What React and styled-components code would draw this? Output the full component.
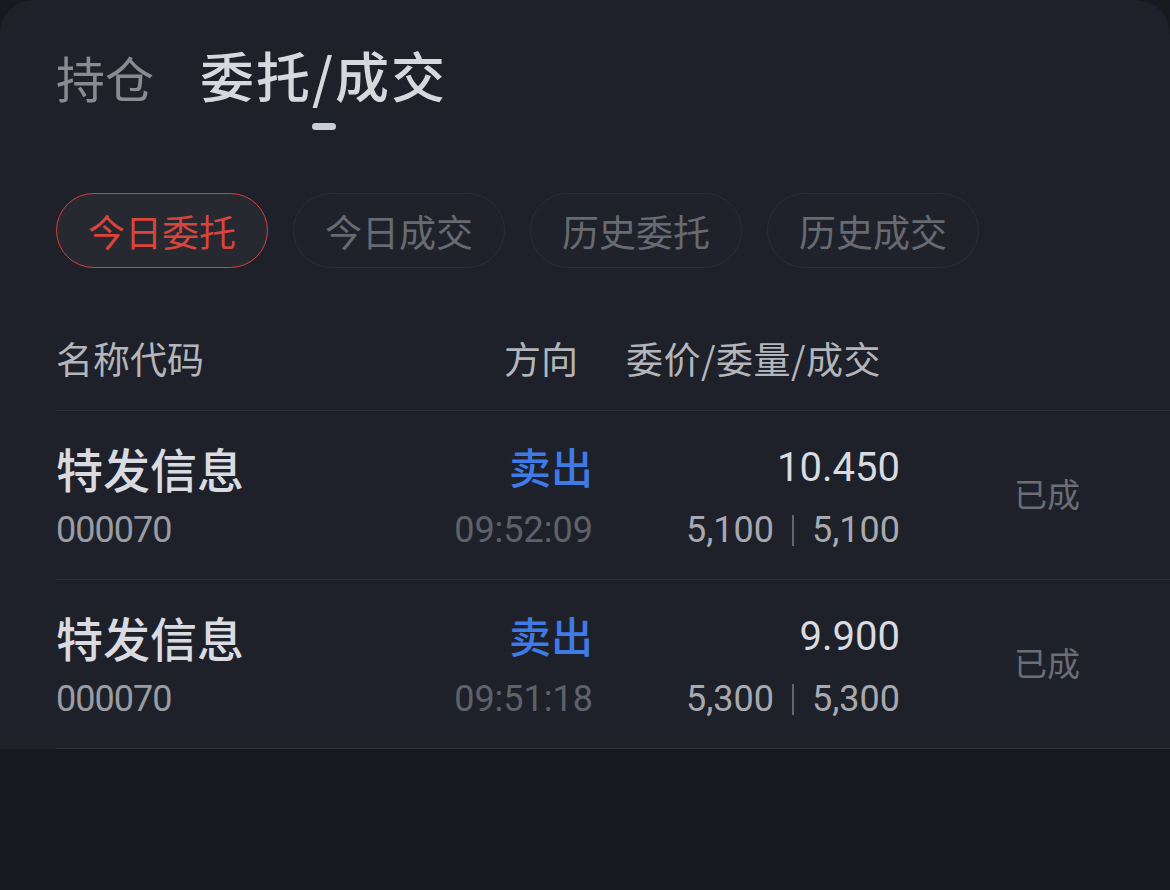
import React from "react";
import styled, { createGlobalStyle } from "styled-components";

const Global = createGlobalStyle`
  html, body { margin: 0; padding: 0; background: #17191f; }
  body { font-family: "Noto Sans CJK SC", "Noto Sans", sans-serif; }
  * { box-sizing: border-box; }
`;

const Panel = styled.div`
  width: 1170px;
  background: #1e2129;
  border-radius: 34px 34px 0 0;
  overflow: hidden;
`;

const Tabs = styled.div`
  display: flex;
  align-items: baseline;
  gap: 46px;
  padding: 49px 0 0 56px;
`;

const Tab = styled.div`
  display: flex;
  flex-direction: column;
  align-items: center;
`;

const TabText = styled.span`
  font-size: ${(p) => (p.$active ? 54 : 49)}px;
  letter-spacing: ${(p) => (p.$active ? 2 : 0)}px;
  line-height: 52px;
  font-weight: ${(p) => (p.$active ? 500 : 400)};
  color: ${(p) => (p.$active ? "#d6d8de" : "#898b92")};
  white-space: nowrap;
`;

const Indicator = styled.div`
  width: 24px;
  height: 7px;
  border-radius: 4px;
  margin-top: 22px;
  background: ${(p) => (p.$active ? "#c9cdd6" : "transparent")};
`;

const Pills = styled.div`
  display: flex;
  gap: 25px;
  padding: 0 56px;
  margin-top: 61px;
`;

const Pill = styled.div`
  width: 212px;
  height: 75px;
  border-radius: 38px;
  border: 1.5px solid ${(p) => (p.$active ? "#d8403a" : "#2b2e36")};
  background: ${(p) => (p.$active ? "#262930" : "#1f222a")};
  color: ${(p) => (p.$active ? "#d9443c" : "#676a71")};
  font-size: 37px;
  display: flex;
  align-items: center;
  justify-content: center;
`;

const Table = styled.div`
  margin-left: 56px;
`;

const grid = `
  display: grid;
  grid-template-columns: 344px 193px 307px 1fr;
`;

const Header = styled.div`
  ${grid}
  margin-top: 65px;
  padding-bottom: 27px;
  border-bottom: 1px solid #2c2f37;
  font-size: 37px;
  line-height: 50px;
  color: #b3b5bb;
`;

const HeadCell = styled.div`
  text-align: ${(p) => p.$align || "left"};
  padding-right: ${(p) => p.$pr || 0}px;
  padding-left: ${(p) => p.$pl || 0}px;
  letter-spacing: ${(p) => p.$ls || 0}px;
  white-space: nowrap;
`;

const Row = styled.div`
  ${grid}
  padding: 31px 0 29px;
  border-bottom: 1px solid #2c2f37;
`;

const Cell = styled.div`
  display: flex;
  flex-direction: column;
  gap: 16px;
  align-items: ${(p) => (p.$right ? "flex-end" : "flex-start")};
`;

const Name = styled.div`
  height: 52px;
  line-height: 52px;
  font-size: 47px;
  font-weight: 500;
  color: #d9dbe0;
`;

const Num = styled.div`
  font-family: Roboto, "Noto Sans", sans-serif;
  height: 40px;
  line-height: 40px;
  font-size: 36px;
  letter-spacing: ${(p) => p.$ls || 0}px;
  color: ${(p) => p.$color || "#a7a9af"};
  display: flex;
  align-items: center;
  white-space: nowrap;
`;

const Price = styled.div`
  font-family: Roboto, "Noto Sans", sans-serif;
  height: 52px;
  line-height: 52px;
  font-size: 40px;
  color: #d9dbe0;
`;

const Side = styled.div`
  height: 52px;
  line-height: 48px;
  font-size: 42px;
  font-weight: 500;
  color: #3e7be6;
`;

const Divider = styled.span`
  display: inline-block;
  width: 2px;
  height: 31px;
  background: #62656c;
  margin: 0 18px;
`;

const Status = styled.div`
  align-self: center;
  padding-left: 114px;
  padding-bottom: 6px;
  font-size: 33px;
  color: #6b6e76;
`;

const orders = [
  { name: "特发信息", code: "000070", side: "卖出", time: "09:52:09", price: "10.450", qty: "5,100", done: "5,100", status: "已成" },
  { name: "特发信息", code: "000070", side: "卖出", time: "09:51:18", price: "9.900", qty: "5,300", done: "5,300", status: "已成" },
];

const filters = ["今日委托", "今日成交", "历史委托", "历史成交"];

export default function App() {
  return (
    <>
      <Global />
      <Panel>
        <Tabs>
          <Tab>
            <TabText>持仓</TabText>
            <Indicator />
          </Tab>
          <Tab>
            <TabText $active>委托/成交</TabText>
            <Indicator $active />
          </Tab>
        </Tabs>
        <Pills>
          {filters.map((f, i) => (
            <Pill key={f} $active={i === 0}>{f}</Pill>
          ))}
        </Pills>
        <Table>
          <Header>
            <HeadCell>名称代码</HeadCell>
            <HeadCell $align="right" $pr={15}>方向</HeadCell>
            <HeadCell $pl={33} $ls={0.5}>委价/委量/成交</HeadCell>
            <HeadCell />
          </Header>
          {orders.map((o, i) => (
            <Row key={i}>
              <Cell>
                <Name>{o.name}</Name>
                <Num $ls={-1} $color="#9a9ca3">{o.code}</Num>
              </Cell>
              <Cell $right>
                <Side>{o.side}</Side>
                <Num $color="#5e6169">{o.time}</Num>
              </Cell>
              <Cell $right>
                <Price>{o.price}</Price>
                <Num>
                  {o.qty}
                  <Divider />
                  {o.done}
                </Num>
              </Cell>
              <Status>{o.status}</Status>
            </Row>
          ))}
        </Table>
      </Panel>
    </>
  );
}
